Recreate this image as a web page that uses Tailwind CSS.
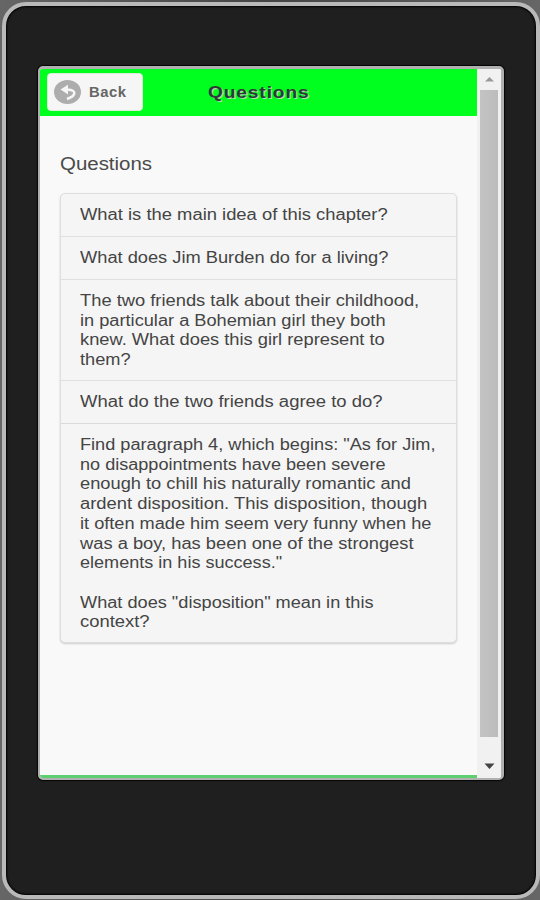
<!DOCTYPE html>
<html lang="en">
<head>
<meta charset="utf-8">
<title>Questions</title>
<script src="https://cdn.jsdelivr.net/npm/@tailwindcss/browser@4"></script>
</head>
<body class="h-[900px] w-[540px] overflow-hidden bg-linear-to-r from-[#666] via-[#444] to-[#666] pt-[2px] pl-[2px] font-['Liberation_Sans',Arial,sans-serif] text-[#444]">
<main class="h-[897px] w-[538px] rounded-[24px] border-[4px] border-[#b9b9b9] bg-[#1f1f1f] pt-[60px] pl-[32px] shadow-[inset_0_0_2px_1px_#000]">
  <div class="flex h-[714px] w-[466px] overflow-hidden rounded-[5px] border-[3px] border-b-[2px] border-l-[2px] border-[#b0b0b0] bg-[#f9f9f9] shadow-[0_0_1px_1px_#050505]">
    <section class="flex w-[437px] shrink-0 flex-col">
      <header class="flex h-[47px] shrink-0 bg-[#00ff1e] pt-[4px] pl-[7px]">
        <button class="flex h-[38px] w-[96px] items-center rounded-[4px] border border-[#d9eed9] bg-[#f6f6f6] pl-[6px]">
          <svg class="h-[24px] w-[27px] shrink-0" viewBox="0 0 27 24"><ellipse cx="13.5" cy="12" rx="13.5" ry="12" fill="#adadad"/><path d="M11 9.800H14.500C22 9.800 23 15.500 13 19" fill="none" stroke="#f6f6f6" stroke-width="2.6"/><path d="M6.500 9.500L14 4.800V14.500Z" fill="#f6f6f6"/></svg>
          <span class="ml-[8px] h-[18px] text-[14px] leading-[19px] font-bold whitespace-nowrap text-[#666]"><span data-w="37" class="inline-block origin-left tracking-[0.5px]">Back</span></span>
        </button>
        <h1 class="ml-[65px] h-[38px] text-[16px] leading-[39px] font-bold whitespace-nowrap text-[#2b3b30] [text-shadow:1px_1px_0_#b8d8b8]"><span data-w="101" class="inline-block origin-left tracking-[0.8px]">Questions</span></h1>
      </header>
      <div class="grow pt-[36px] pl-[20px]">
        <h2 class="h-[24px] text-[18px] leading-[24px] whitespace-nowrap text-[#4a4a4a]"><span data-w="92" class="inline-block origin-left">Questions</span></h2>
        <ul class="mt-[17px] h-[450px] w-[397px] rounded-[5px] border border-[#dedede] bg-[#f5f5f5] text-[16px] leading-[19.7px] whitespace-nowrap shadow-[0_1px_2px_#ccc]">
          <li class="h-[43px] border-b border-[#dfdfdf] pt-[11px] pl-[19px]"><span data-w="308" class="inline-block origin-left">What is the main idea of this chapter?</span></li>
          <li class="h-[43px] border-b border-[#dfdfdf] pt-[11px] pl-[19px]"><span data-w="308" class="inline-block origin-left">What does Jim Burden do for a living?</span></li>
          <li class="h-[101px] border-b border-[#dfdfdf] pt-[11px] pl-[19px]"><span data-w="339" class="inline-block origin-left">The two friends talk about their childhood,</span><br><span data-w="306" class="inline-block origin-left">in particular a Bohemian girl they both</span><br><span data-w="305" class="inline-block origin-left">knew. What does this girl represent to</span><br><span data-w="50" class="inline-block origin-left">them?</span></li>
          <li class="h-[43px] border-b border-[#dadada] pt-[11px] pl-[19px]"><span data-w="302" class="inline-block origin-left">What do the two friends agree to do?</span></li>
          <li class="pt-[11px] pl-[19px]"><span data-w="355" class="inline-block origin-left">Find paragraph 4, which begins: "As for Jim,</span><br><span data-w="305" class="inline-block origin-left">no disappointments have been severe</span><br><span data-w="331" class="inline-block origin-left">enough to chill his naturally romantic and</span><br><span data-w="347" class="inline-block origin-left">ardent disposition. This disposition, though</span><br><span data-w="352" class="inline-block origin-left">it often made him seem very funny when he</span><br><span data-w="333" class="inline-block origin-left">was a boy, has been one of the strongest</span><br><span data-w="202" class="inline-block origin-left">elements in his success."</span><br><br><span data-w="294" class="inline-block origin-left">What does "disposition" mean in this</span><br><span data-w="69" class="inline-block origin-left">context?</span></li>
        </ul>
      </div>
      <div class="h-[3px] shrink-0 bg-[#5fce70]"></div>
    </section>
    <aside class="flex w-[24px] shrink-0 flex-col items-center bg-[#f1f1f1]">
      <svg class="h-[21px] w-[25px] shrink-0" viewBox="0 0 25 21"><path d="M8 12.500L12.500 8L17 12.500Z" fill="#999"/></svg>
      <div class="h-[647px] w-[18px] shrink-0 bg-linear-to-r from-[#c3c3c3] to-[#bcbcbc]"></div>
      <svg class="h-[40px] w-[25px] shrink-0" viewBox="0 0 25 40"><path d="M7.500 26.500H17.500L12.500 32Z" fill="#444"/></svg>
    </aside>
  </div>
</main>
<script>
// Stretch each line horizontally to its measure, whenever its own size changes.
const fit = e => { e.style.transform = 'scaleX(' + e.dataset.w / e.offsetWidth + ')'; };
const observer = new ResizeObserver(entries => entries.forEach(x => fit(x.target)));
const lines = document.querySelectorAll('[data-w]');
lines.forEach(e => observer.observe(e));
window.addEventListener('load', () => lines.forEach(fit));
</script>
</body>
</html>
